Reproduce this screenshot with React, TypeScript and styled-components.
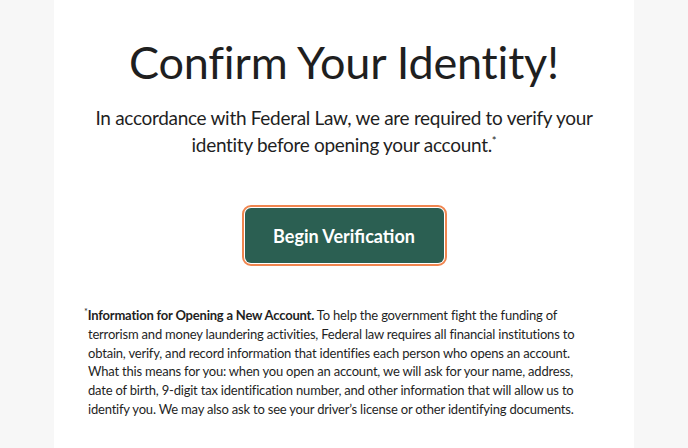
import React from "react";
import styled, { createGlobalStyle } from "styled-components";

const Global = createGlobalStyle`
  html, body { margin: 0; padding: 0; background: #f7f7f7; }
  body { font-family: "Lato", "Noto Sans", sans-serif; color: #1f1f1f; }
`;

const Page = styled.div`
  display: flex;
  justify-content: center;
  min-height: 448px;
`;

const Panel = styled.main`
  width: 580px;
  background: #ffffff;
  display: flex;
  flex-direction: column;
  align-items: center;
  padding-top: 32px;
  box-sizing: border-box;
  min-height: 448px;
`;

const Title = styled.h1`
  margin: 0;
  font-size: 45px;
  font-weight: 400;
  line-height: 60px;
  letter-spacing: -0.2px;
  color: #1f1f1f;
`;

const Lead = styled.p`
  margin: 12px 0 0;
  width: 520px;
  text-align: center;
  font-size: 19px;
  letter-spacing: -0.3px;
  line-height: 27px;
  color: #1f1f1f;
`;

const Sup = styled.span`
  font-size: 0.6em;
  vertical-align: top;
  position: relative;
  top: -4px;
`;

const ButtonWrap = styled.div`
  margin-top: 50px;
`;

const Button = styled.button`
  width: 199px;
  height: 55px;
  border: none;
  border-radius: 6px;
  background: #2b5f52;
  color: #ffffff;
  font-family: "Lato", sans-serif;
  font-weight: 700;
  font-size: 18px;
  outline: 2px solid #f0854f;
  outline-offset: 1px;
  cursor: pointer;
`;

const Fine = styled.p`
  margin: 43px 0 0;
  align-self: stretch;
  box-sizing: border-box;
  padding: 0 40px 0 34px;
  font-size: 13px;
  letter-spacing: -0.2px;
  line-height: 18.8px;
  color: #1f1f1f;
  text-indent: -4px;
`;

const FineSup = styled.span`
  font-size: 9px;
  line-height: 1;
  vertical-align: top;
  position: relative;
  top: 1px;
`;

export default function App() {
  return (
    <>
      <Global />
      <Page>
        <Panel>
          <Title>Confirm Your Identity!</Title>
          <Lead>
            In accordance with Federal Law, we are required to verify your identity before opening your account.
            <Sup>*</Sup>
          </Lead>
          <ButtonWrap>
            <Button>Begin Verification</Button>
          </ButtonWrap>
          <Fine>
            <FineSup>*</FineSup>
            <strong>Information for Opening a New Account.</strong> To help the government fight the funding of
            terrorism and money laundering activities, Federal law requires all financial institutions to obtain,
            verify, and record information that identifies each person who opens an account. What this means for
            you: when you open an account, we will ask for your name, address, date of birth, 9-digit tax
            identification number, and other information that will allow us to identify you. We may also ask to see
            your driver’s license or other identifying documents.
          </Fine>
        </Panel>
      </Page>
    </>
  );
}
